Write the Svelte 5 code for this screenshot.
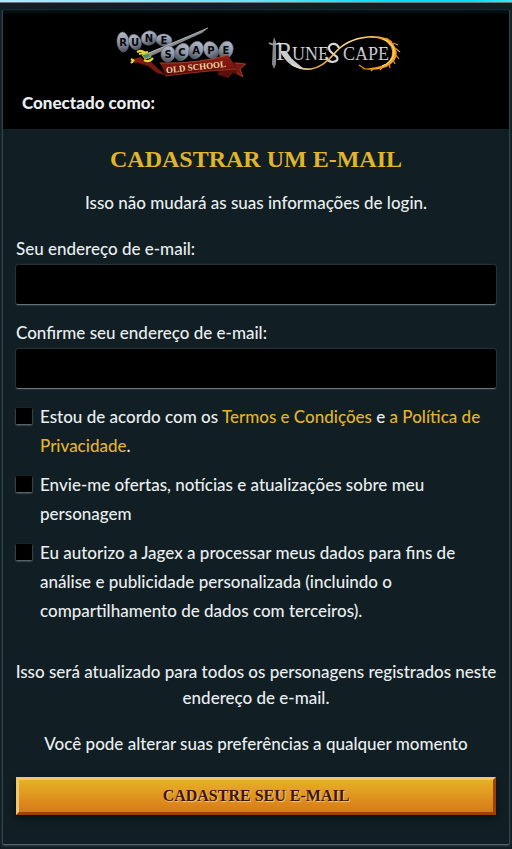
<script>
  let email = $state('');
  let confirmEmail = $state('');
  let terms = $state(false);
  let offers = $state(false);
  let analytics = $state(false);

  // Each stone carries one letter of the old school logo.
  const stones = [
    { x: 17, y: 22, rx: 6, ry: 10, r: -4, t: 'R' },
    { x: 29, y: 22, rx: 6, ry: 8, r: -24, t: 'U' },
    { x: 43, y: 18, rx: 8, ry: 7, r: -20, t: 'N' },
    { x: 58, y: 20, rx: 8, ry: 6, r: 4, t: 'E' },
    { x: 62, y: 34, rx: 7, ry: 8, r: 10, t: 'S' },
    { x: 76, y: 32, rx: 7, ry: 9, r: 28, t: 'C' },
    { x: 90, y: 30, rx: 7, ry: 9, r: 24, t: 'A' },
    { x: 105, y: 30, rx: 7, ry: 9, r: -30, t: 'P' },
    { x: 120, y: 30, rx: 7, ry: 9, r: 20, t: 'E' }
  ];
</script>

{#snippet stone(s)}
  <ellipse cx={s.x} cy={s.y} rx={s.rx} ry={s.ry} transform="rotate({s.r} {s.x} {s.y})" fill="url(#stone)" stroke="#666e7d" stroke-width=".6" />
  <text x={s.x} y={s.y + 4} class="rune">{s.t}</text>
{/snippet}

<div class="page">
  <div class="loading"></div>
  <main class="card">
    <header>
      <div class="logos">
        <svg width="150" height="65" viewBox="0 0 150 65" role="img" aria-label="Old School RuneScape">
          <defs>
            <linearGradient id="stone" x1="0" y1="0" x2="0" y2="1">
              <stop offset="0" stop-color="#b4bac8" />
              <stop offset=".55" stop-color="#8b92a2" />
              <stop offset="1" stop-color="#4a505d" />
            </linearGradient>
            <linearGradient id="ribbon" x1="0" y1="0" x2="0" y2="1">
              <stop offset="0" stop-color="#8d2017" />
              <stop offset=".6" stop-color="#77150f" />
              <stop offset="1" stop-color="#4a0b08" />
            </linearGradient>
          </defs>
          {#each stones.slice(0, 4) as s}
            {@render stone(s)}
          {/each}
          <path d="M42 33 90 13 102 8 96 13 45 36Z" fill="#85898d" />
          <path d="M43 33 102 8" stroke="#c7c9cb" stroke-width=".8" />
          {#each stones.slice(4) as s}
            {@render stone(s)}
          {/each}
          <path d="M112 43 128 42 140 44 134 49 137 57 127 53 122 58 112 55Z" fill="#5b110c" stroke="#2f0605" />
          <path d="M129 43 140 44 134 49 137 57 131 53" fill="#741a12" stroke="#a3462b" stroke-width=".8" />
          <path d="M34 38 45 42 59 55 51 53 42 46 32 43Z" fill="#761b12" stroke="#4a0c08" />
          <path d="M54 43Q92 44 122 35Q127 42 130 49Q98 51 59 56Q58 49 54 43Z" fill="url(#ribbon)" />
          <path d="M54 43Q92 44 122 35" fill="none" stroke="#b5532f" stroke-width=".8" />
          <path d="M59 56Q98 51 130 49" fill="none" stroke="#a03c25" stroke-width=".8" />
          <path d="M27 39 35 37 36 42 28 43Z" fill="#831d12" />
          <path d="M25 39 28 41M25 43 28 40M31 32Q37 29 39 34L43 38M33 34 42 32M38 40Q43 43 47 38" fill="none" stroke="#e6d936" stroke-width="2.2" />
          <path d="M36 35 43 33 45 37 39 39Z" fill="#468a88" stroke="#c7b929" />
          <text x="90" y="50" class="school" transform="rotate(-6 90 47)">OLD SCHOOL</text>
        </svg>
        <svg width="145" height="50" viewBox="0 0 145 50" role="img" aria-label="RuneScape">
          <defs>
            <linearGradient id="steel" x1="0" y1="0" x2="0" y2="1">
              <stop offset="0" stop-color="#f3f3f3" />
              <stop offset=".55" stop-color="#b5babd" />
              <stop offset="1" stop-color="#dedede" />
            </linearGradient>
            <linearGradient id="fire" gradientUnits="userSpaceOnUse" x1="20" y1="0" x2="140" y2="0">
              <stop offset="0" stop-color="#ddd9ca" />
              <stop offset=".15" stop-color="#ddd9ca" />
              <stop offset=".3" stop-color="#e2a23a" />
              <stop offset=".6" stop-color="#ffe28b" />
              <stop offset="1" stop-color="#f28b0c" />
            </linearGradient>
          </defs>
          <path d="M12 14 13 9 15 14 15 36 13 41 11 36Z" fill="#85898c" />
          <path d="M8 15Q13 18 19 15" fill="none" stroke="#9b9fa2" stroke-width="1.8" />
          <g fill="url(#steel)">
            <text x="15" y="32" class="cap">R</text>
            <text x="31" y="32" class="small">UNE</text>
            <text x="82" y="32" class="small">CAPE</text>
          </g>
          <path d="M78 20Q76 15 71 16Q66 18 69 23Q73 27 76 29Q78 33 72 34Q67 34 65 29" fill="none" stroke="#d6d8d9" stroke-width="2.2" />
          <path d="M19 23Q27 40 43 41Q37 36 31 31L25 23Z" fill="#c9cccd" />
          <path d="M30 36Q40 42 50 41Q62 39 73 26Q85 11 107 9Q126 8 132 17" fill="none" stroke="url(#fire)" stroke-width="1.7" />
          <path d="M112 9Q129 8 134 19Q139 29 130 36Q120 44 100 41Q117 40 125 36Q134 28 130 19Q125 11 112 9Z" fill="#f6a016" />
          <path d="M125 10 131 14M132 15 137 17M134 20 139 24M135 27 138 31M132 32 134 36M128 35 129 40M121 40 119 42M113 40 110 43M104 41 98 37" fill="none" stroke="#ef920f" stroke-width="1.2" />
          <path d="M122 11Q134 16 133 25Q132 34 121 38" fill="none" stroke="#ffe895" />
        </svg>
      </div>
      <strong>Conectado como:</strong>
    </header>

    <form onsubmit={(e) => e.preventDefault()}>
      <h1>Cadastrar um e-mail</h1>
      <p>Isso não mudará as suas informações de login.</p>

      <div class="fields">
        <div class="field">
          <label for="email">Seu endereço de e-mail:</label>
          <input id="email" type="email" bind:value={email} />
        </div>
        <div class="field">
          <label for="confirm">Confirme seu endereço de e-mail:</label>
          <input id="confirm" type="email" bind:value={confirmEmail} />
        </div>
      </div>

      <div class="checks">
        <div class="check">
          <input id="terms" type="checkbox" bind:checked={terms} />
          <label for="terms">Estou de acordo com os <a href="#termos">Termos e Condições</a> e <a href="#privacidade">a Política de Privacidade</a>.</label>
        </div>
        <div class="check">
          <input id="offers" type="checkbox" bind:checked={offers} />
          <label for="offers">Envie-me ofertas, notícias e atualizações sobre meu personagem</label>
        </div>
        <div class="check">
          <input id="analytics" type="checkbox" bind:checked={analytics} />
          <label for="analytics">Eu autorizo a Jagex a processar meus dados para fins de análise e publicidade personalizada (incluindo o compartilhamento de dados com terceiros).</label>
        </div>
      </div>

      <p class="wide">Isso será atualizado para todos os personagens registrados neste endereço de e-mail.</p>
      <p>Você pode alterar suas preferências a qualquer momento</p>
      <button type="submit">Cadastre seu e-mail</button>
    </form>
  </main>
</div>

<style>
  :global(body) {
    margin: 0;
    background: #111e23;
  }
  .page {
    color: #e9eef0;
    font: 500 17px/26px Lato, "Noto Sans", sans-serif;
  }
  .loading {
    height: 2px;
    background: linear-gradient(90deg, #a5efff, #68e2ff 50%, #00dfff 75%, #00dfff 92%, #38e8ff);
    border-bottom: 1px solid #6d777c;
  }
  .card {
    margin: 6px 2px 5px;
    border: 1px solid #34444d;
    border-top-color: #17272e;
    border-bottom-color: #536570;
    border-radius: 2px;
    box-shadow: 0 1px 2px #34444d;
  }
  header {
    box-sizing: border-box;
    height: 119px;
    padding: 10px 19px 0;
    background: linear-gradient(#07161c, #000 5px);
  }
  .logos {
    display: flex;
    justify-content: center;
    gap: 5px;
    height: 70px;
  }
  .logos svg {
    flex: none;
  }
  .logos svg + svg {
    margin-top: 8px;
  }
  .rune {
    font: bold 10px "DejaVu Sans", sans-serif;
    text-anchor: middle;
    fill: #08090b;
  }
  .school {
    font: bold 9px "Liberation Serif", serif;
    text-anchor: middle;
    fill: #f0d4a0;
  }
  .cap {
    font: 25px "Liberation Serif", serif;
  }
  .small {
    font: 18px "Liberation Serif", serif;
  }
  header strong {
    display: block;
    font-size: 17px;
    font-weight: 900;
  }
  form {
    padding: 14px 12px 29px;
  }
  h1 {
    margin: 0 0 15px;
    color: #e1b42d;
    font: bold 24px/32px "Liberation Serif", serif;
    text-align: center;
    text-transform: uppercase;
  }
  p {
    margin: 0 0 20px;
    text-align: center;
  }
  .fields {
    display: flex;
    flex-direction: column;
    gap: 15px;
    margin: 0 1px 13px;
  }
  .field label {
    display: block;
    margin-bottom: 3px;
  }
  .field input {
    display: block;
    box-sizing: border-box;
    width: 100%;
    height: 40px;
    padding: 0 10px;
    border: 0;
    border-bottom: 1px solid #67717a;
    border-radius: 2px;
    background: #000;
    box-shadow: 0 0 2px #59646b;
    color: inherit;
    font: inherit;
  }
  .checks {
    display: flex;
    flex-direction: column;
    gap: 10px;
    margin: 0 1px 34px;
    line-height: 29px;
  }
  .check {
    display: flex;
    gap: 8px;
  }
  .check input {
    appearance: none;
    flex: none;
    width: 16px;
    height: 16px;
    margin: 6px 0 0;
    background: #000;
    box-shadow: 0 1px 2px #7b858b;
  }
  .check input:checked {
    background: #e1b42d;
  }
  a {
    color: #e1b42d;
    text-decoration: none;
  }
  button {
    display: block;
    box-sizing: border-box;
    width: calc(100% - 2px);
    height: 38px;
    margin: 0 1px;
    padding: 0;
    border: 3px solid;
    border-color: #edc86c #9d4000 #9d4000 #edc86c;
    background: linear-gradient(#e6b126, #d87919);
    box-shadow: 0 3px 6px #061217;
    color: #42130b;
    font: bold 16px/32px "Liberation Serif", serif;
    text-shadow: 1px 1px 1px #f1cf83;
    text-transform: uppercase;
  }
</style>
